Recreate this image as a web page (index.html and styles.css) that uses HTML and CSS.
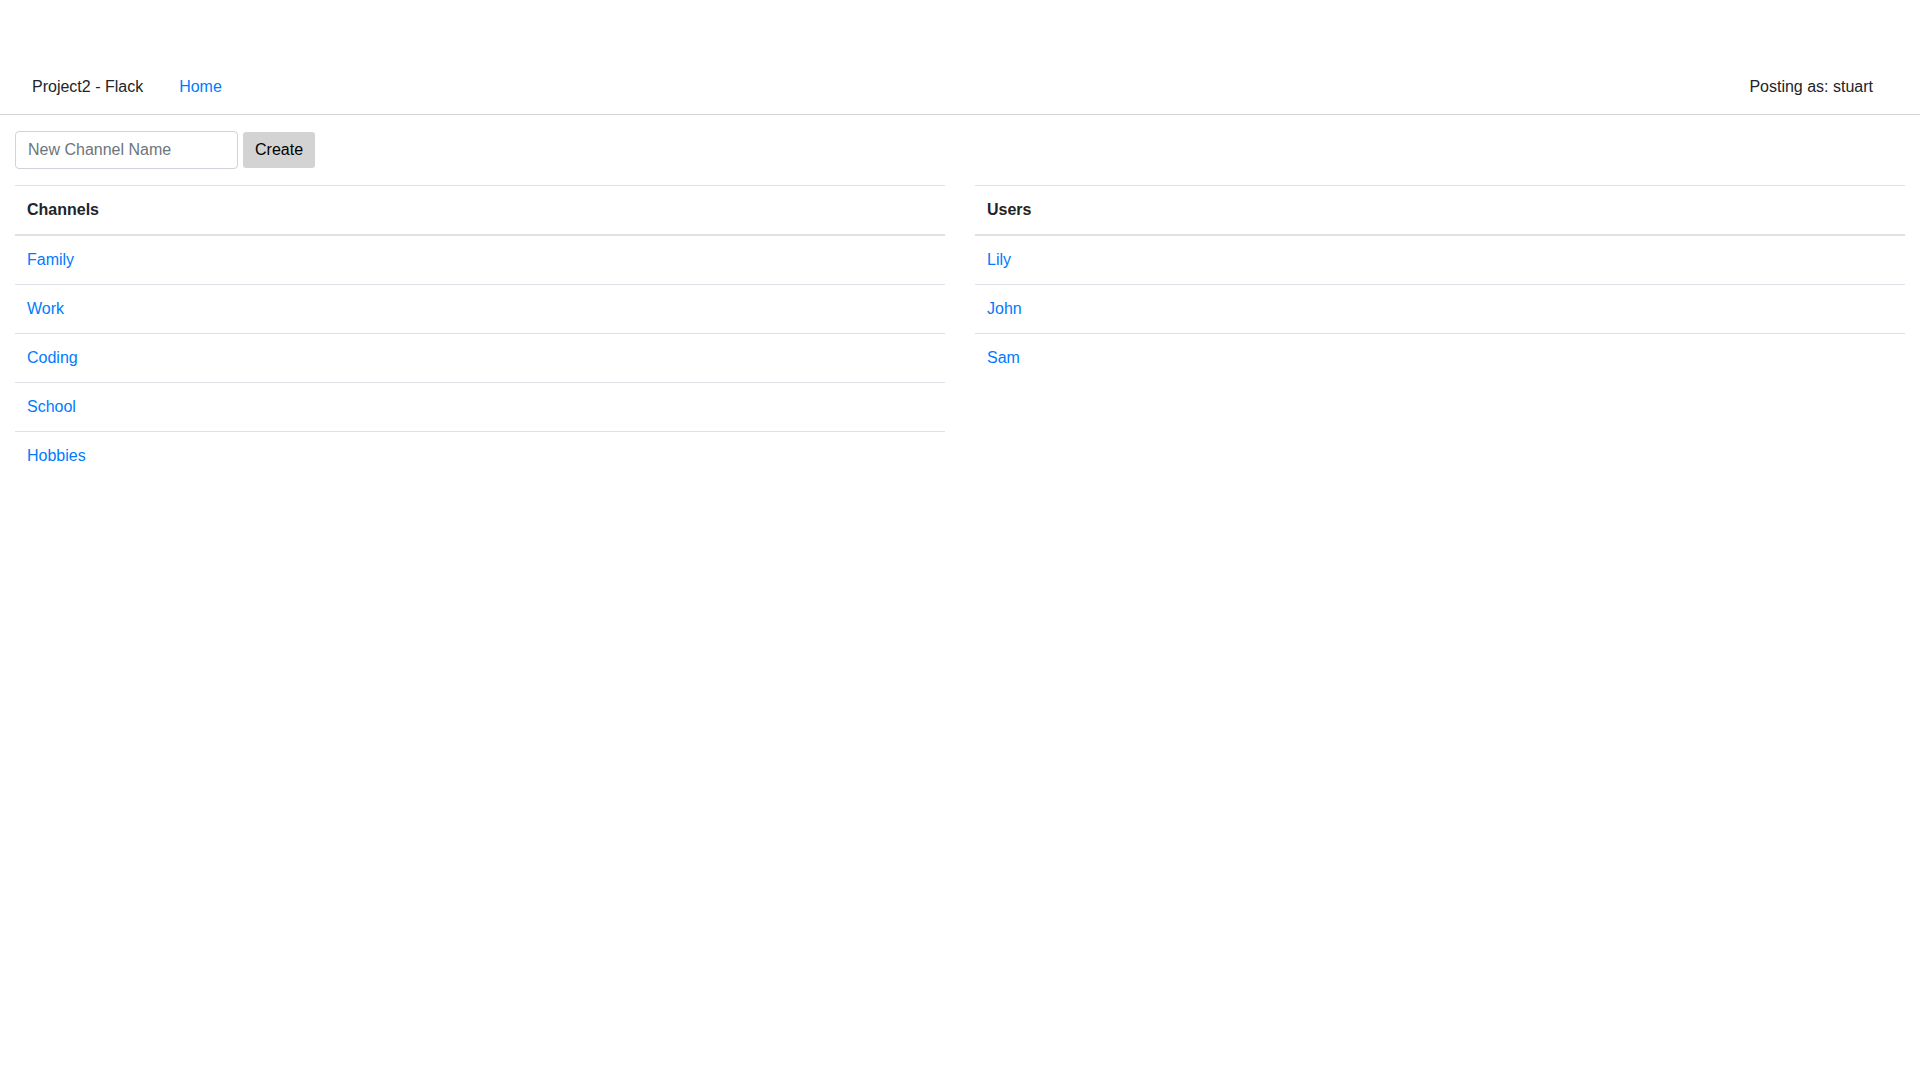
FILE: index.html
```html
<!DOCTYPE html>
<html lang="en">
<head>
<meta charset="utf-8">
<title>Project2 - Flack</title>
<link rel="stylesheet" href="styles.css">
</head>
<body>
<nav class="topbar">
  <ul class="nav-list">
    <li><span class="nav-link brand">Project2 - Flack</span></li>
    <li><a class="nav-link" href="#">Home</a></li>
  </ul>
  <span class="nav-link user">Posting as: stuart</span>
</nav>
<main class="content">
  <form class="new-channel">
    <input class="channel-input" type="text" placeholder="New Channel Name">
    <button class="create-btn" type="button">Create</button>
  </form>
  <div class="columns">
    <table class="list-table">
      <thead><tr><th>Channels</th></tr></thead>
      <tbody>
        <tr><td><a href="#">Family</a></td></tr>
        <tr><td><a href="#">Work</a></td></tr>
        <tr><td><a href="#">Coding</a></td></tr>
        <tr><td><a href="#">School</a></td></tr>
        <tr><td><a href="#">Hobbies</a></td></tr>
      </tbody>
    </table>
    <table class="list-table">
      <thead><tr><th>Users</th></tr></thead>
      <tbody>
        <tr><td><a href="#">Lily</a></td></tr>
        <tr><td><a href="#">John</a></td></tr>
        <tr><td><a href="#">Sam</a></td></tr>
      </tbody>
    </table>
  </div>
</main>
</body>
</html>
```
FILE: styles.css
```css
* { box-sizing: border-box; }

html, body {
  margin: 0;
  background: #fff;
  color: #212529;
  font-family: "Liberation Sans", Arial, sans-serif;
  font-size: 16px;
  line-height: 24px;
}

a { color: #007bff; text-decoration: none; }

.topbar {
  display: flex;
  justify-content: space-between;
  align-items: center;
  padding: 67px 31px 7px 16px;
  border-bottom: 1px solid #d3d3d3;
}

.nav-list {
  display: flex;
  gap: 4px;
  list-style: none;
  margin: 0;
  padding: 0;
}

.nav-link {
  display: block;
  padding: 8px 16px;
}

.brand, .user { color: #212529; }

.content { padding: 16px 15px 0; }

.new-channel {
  display: flex;
  align-items: center;
  gap: 5px;
  margin: 0 0 16px;
}

.channel-input {
  width: 223px;
  height: 38px;
  padding: 6px 12px;
  border: 1px solid #ced4da;
  border-radius: 4px;
  font: inherit;
  color: #495057;
}

.channel-input::placeholder { color: #6c757d; }

.create-btn {
  height: 36px;
  padding: 0 12px;
  border: none;
  border-radius: 3px;
  background: #d3d3d3;
  color: #000;
  font: inherit;
}

.columns {
  display: grid;
  grid-template-columns: 1fr 1fr;
  column-gap: 30px;
  align-items: start;
}

.list-table {
  width: 100%;
  border-collapse: collapse;
}

.list-table th,
.list-table td {
  padding: 12px;
  text-align: left;
  border-top: 1px solid #dee2e6;
}

.list-table th {
  font-weight: bold;
  border-bottom: 2px solid #dee2e6;
}
```
